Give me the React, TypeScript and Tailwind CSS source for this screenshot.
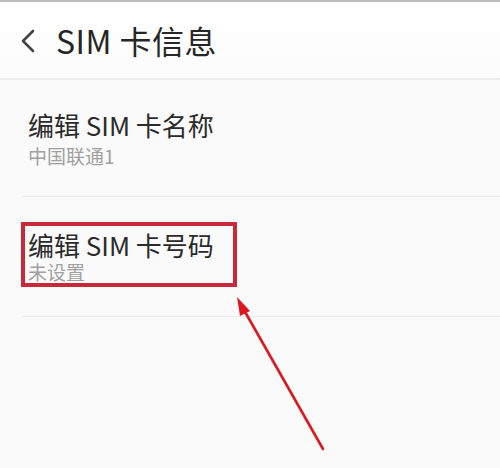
const FONT = '"Noto Sans CJK SC", "Noto Sans", sans-serif';

function SettingItem({ title, subtitle, highlighted }: { title: string; subtitle: string; highlighted?: boolean }) {
  if (highlighted) {
    return (
      <div className="ml-[22px] pt-[25px] pb-[29px] border-b border-[#ebebeb]">
        <div className="w-[216px] -ml-px border-4 border-[#c8283a] pl-[3px] pt-[2px]">
          <div className="text-[26px] leading-[33px] text-[#2b2b2b]">{title}</div>
          <div className="text-[19px] leading-[22px] text-[#a0a0a0]">{subtitle}</div>
        </div>
      </div>
    );
  }
  return (
    <div className="ml-[22px] pl-[6px] pt-[28px] pb-[28px] border-b border-[#ebebeb]">
      <div className="text-[26px] leading-[34px] text-[#2b2b2b]">{title}</div>
      <div className="mt-px text-[19px] leading-[25px] text-[#a0a0a0]">{subtitle}</div>
    </div>
  );
}

export default function App() {
  return (
    <div className="relative w-[500px] h-[468px] overflow-hidden bg-[#fafafa]" style={{ fontFamily: FONT }}>
      {/* status bar edge */}
      <div className="h-[2px] bg-[#bdbdbd]" />

      {/* Header */}
      <header className="h-[78px] flex items-center bg-gradient-to-b from-white to-[#fbfbfb] border-b-2 border-[#ebebeb]">
        <svg className="ml-[20px] mt-[2px]" width="16" height="24" viewBox="0 0 16 24" fill="none">
          <polyline points="13,2 3,12 13,22" stroke="#444" strokeWidth="2.6" strokeLinecap="round" strokeLinejoin="round" />
        </svg>
        <h1 className="ml-[20px] text-[32px] tracking-[0.5px] leading-none text-[#262626] font-normal">SIM 卡信息</h1>
      </header>

      <SettingItem title="编辑 SIM 卡名称" subtitle="中国联通1" />
      <SettingItem title="编辑 SIM 卡号码" subtitle="未设置" highlighted />

      {/* annotation arrow */}
      <svg className="absolute left-0 top-0 pointer-events-none" width="500" height="468" viewBox="0 0 500 468">
        <line x1="323" y1="449" x2="244" y2="310" stroke="#dc1820" strokeWidth="2.6" strokeLinecap="round" />
        <polygon points="237,297 250,311 240,316" fill="#dc1820" />
      </svg>
    </div>
  );
}
